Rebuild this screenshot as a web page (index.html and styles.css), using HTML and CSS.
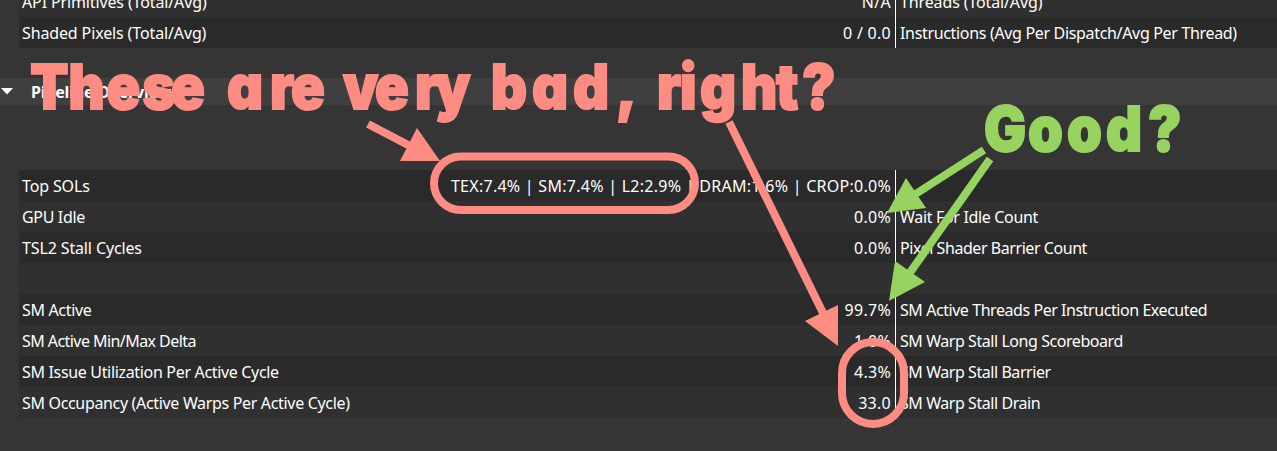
FILE: index.html
```html
<!DOCTYPE html>
<html lang="en">
<head>
<meta charset="utf-8">
<title>Pipeline Overview</title>
<link rel="stylesheet" href="styles.css">
</head>
<body>
<main class="panel">
  <section class="table table-top">
    <div class="row"><span class="name loose">API Primitives (Total/Avg)</span><span class="value">N/A</span><span class="other loose">Threads (Total/Avg)</span></div>
    <div class="row"><span class="name loose">Shaded Pixels (Total/Avg)</span><span class="value">0 / 0.0</span><span class="other">Instructions (Avg Per Dispatch/Avg Per Thread)</span></div>
  </section>
  <header class="section-head">
    <svg class="caret" width="12" height="7" viewBox="0 0 12 7"><path d="M0 0H12L6 6.6Z" fill="#fff"/></svg>
    <h2 class="title">Pipeline Overview</h2>
  </header>
  <section class="table">
    <div class="row"><span class="name loose">Top SOLs</span><span class="value">TEX:7.4% | SM:7.4% | L2:2.9% | DRAM:1.6% | CROP:0.0%</span><span class="other"></span></div>
    <div class="row"><span class="name">GPU Idle</span><span class="value">0.0%</span><span class="other">Wait For Idle Count</span></div>
    <div class="row"><span class="name loose">TSL2 Stall Cycles</span><span class="value">0.0%</span><span class="other tight">Pixel Shader Barrier Count</span></div>
    <div class="row"><span class="name"></span><span class="value"></span><span class="other"></span></div>
    <div class="row"><span class="name">SM Active</span><span class="value">99.7%</span><span class="other tight">SM Active Threads Per Instruction Executed</span></div>
    <div class="row"><span class="name tighter">SM Active Min/Max Delta</span><span class="value">1.0%</span><span class="other tight">SM Warp Stall Long Scoreboard</span></div>
    <div class="row"><span class="name">SM Issue Utilization Per Active Cycle</span><span class="value">4.3%</span><span class="other tight">SM Warp Stall Barrier</span></div>
    <div class="row"><span class="name">SM Occupancy (Active Warps Per Active Cycle)</span><span class="value">33.0</span><span class="other tight">SM Warp Stall Drain</span></div>
  </section>
  <svg class="notes" width="1277" height="451" viewBox="0 0 1277 451">
    <g class="red">
      <g transform="scale(.9 1)">
        <text class="note" y="109.500" x="33.5 76.1 118.3 158.3 190">These</text>
        <text class="note" y="109.500" x="252.2 300 323.3">are</text>
        <text class="note" y="109.500" x="381.1 416.7 461.1 483.3">very</text>
        <text class="note" y="109.500" x="545.6 591.1 636.7 684.4">bad,</text>
        <text class="note" y="109.500" x="730 755.6 777.8 823.3 862.2 891.1">right?</text>
      </g>
      <rect class="ring" x="434" y="156.500" width="261" height="53.500" rx="26.700"/>
      <rect class="ring" x="842" y="342" width="62" height="82" rx="31"/>
      <path class="shaft" d="M368 124L412 147M729 122L824 315"/>
      <path class="head" d="M417 128L440 161L400 161ZM838 305V346L805 321Z"/>
    </g>
    <g class="green">
      <g transform="scale(.9 1)">
        <text class="note" y="151.500" x="1093.3 1142.2 1185.6 1228.9 1275.6">Good?</text>
      </g>
      <path class="shaft" d="M984 150L914 195M990 159L909 274"/>
      <path class="head" d="M906 178L926 208L887 213ZM895 261L925 282L889 301Z"/>
    </g>
  </svg>
</main>
</body>
</html>
```
FILE: styles.css
```css
body {
  margin: 0;
  background: #353535;
  color: #fff;
  font: 16px/33px "Noto Sans", sans-serif;
}
.panel {
  position: relative;
  height: 451px;
  overflow: hidden;
}
.table {
  margin-left: 19px;
}
.table-top {
  margin-top: -14px;
}
.row {
  display: grid;
  grid-template-columns: 420px 456px 1fr;
  height: 31px;
  background: #2a2a2a;
  white-space: nowrap;
  letter-spacing: -0.33px;
}
.row:nth-child(even) {
  background: #303030;
}
.table-top .row:nth-child(odd) {
  background: #303030;
}
.table-top .row:nth-child(even) {
  background: #2a2a2a;
}
.name {
  padding-left: 3px;
}
.value {
  padding-right: 4px;
  text-align: right;
  letter-spacing: 0.27px;
}
.other {
  height: 31px;
  padding-left: 4px;
  border-left: 1px solid #fff;
}
.loose {
  letter-spacing: -0.13px;
}
.tight {
  letter-spacing: -0.44px;
}
.tighter {
  letter-spacing: -0.56px;
}
.section-head {
  display: flex;
  align-items: center;
  height: 27px;
  margin: 30px 0 65px;
  background: #3f3f3f;
}
.caret {
  margin-left: 1px;
}
.title {
  margin: 0 0 0 18px;
  font-size: 16px;
  line-height: 27px;
  letter-spacing: -0.2px;
  padding-top: 2px;
}
.notes {
  position: absolute;
  inset: 0;
}
.note {
  font: 900 62px Inter, Lato, sans-serif;
  font-feature-settings: "cv11" 1;
  stroke-width: 2px;
  stroke-linejoin: miter;
  stroke-miterlimit: 2;
}
.red {
  fill: #ff8c82;
  stroke: #ff8c82;
}
.green {
  fill: #96d35f;
  stroke: #96d35f;
}
.ring {
  fill: none;
  stroke-width: 8px;
}
.shaft {
  fill: none;
  stroke-width: 8px;
}
.head {
  stroke: none;
}
```
